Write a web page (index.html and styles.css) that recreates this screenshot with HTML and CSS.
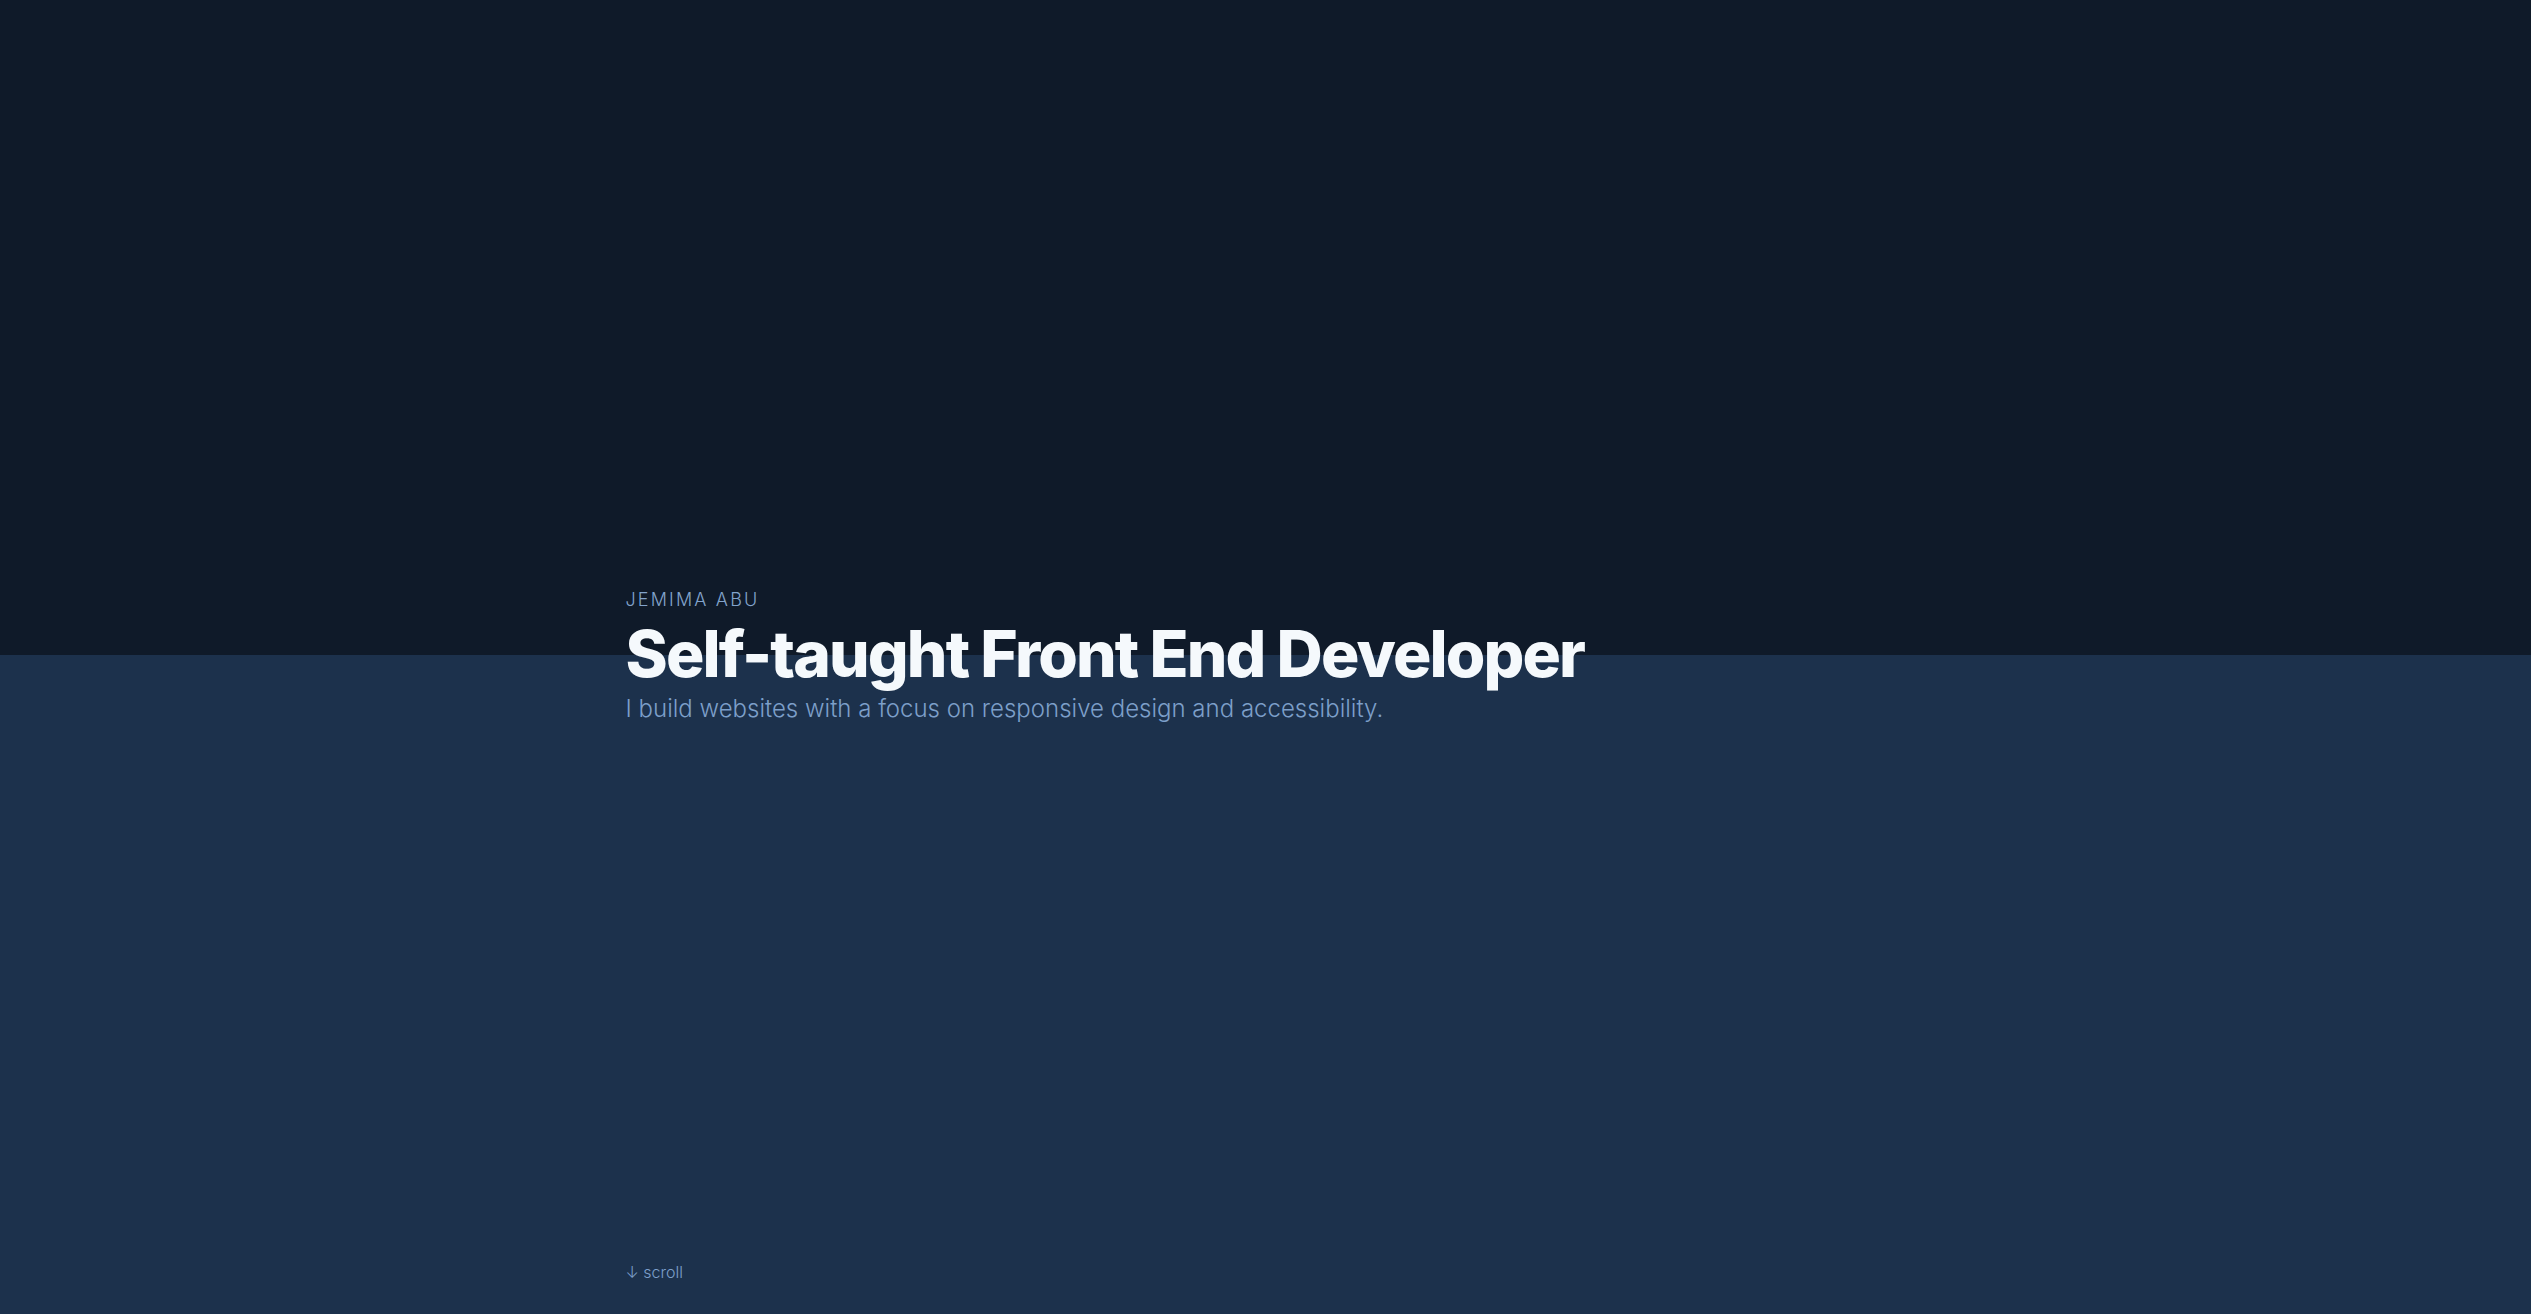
FILE: index.html
```html
<!DOCTYPE html>
<html lang="en">
<head>
<meta charset="utf-8">
<title>Jemima Abu</title>
<link rel="stylesheet" href="styles.css">
</head>
<body>
<main class="hero">
  <div class="hero-inner">
    <p class="eyebrow">JEMIMA ABU</p>
    <h1 class="title">Self-taught Front End Developer</h1>
    <p class="lead">I build websites with a focus on responsive design and accessibility.</p>
  </div>
  <div class="scroll-hint">↓ scroll</div>
</main>
</body>
</html>
```
FILE: styles.css
```css
* { box-sizing: border-box; }
html, body { margin: 0; padding: 0; }
body {
  font-family: Inter, "Noto Sans", sans-serif;
  background: #1c314c;
}
.hero {
  position: relative;
  min-height: 100vh;
  display: flex;
  align-items: center;
  justify-content: center;
  background: linear-gradient(to bottom, #0f1a29 0, #0f1a29 655px, #1c314c 655px, #1c314c 100%);
}
.hero-inner {
  width: 100%;
  max-width: 1280px;
  margin: 0 auto;
}
.eyebrow {
  margin: 0 0 7px;
  font-size: 18px;
  font-weight: 300;
  letter-spacing: 0.12em;
  color: #82a3cb;
  line-height: 1.3;
}
.title {
  margin: 0;
  font-size: 64px;
  font-weight: 800;
  letter-spacing: -0.029em;
  color: #f5f9fc;
  line-height: 1.1;
}
.lead {
  margin: 3px 0 0;
  font-size: 24px;
  font-weight: 300;
  color: #7c9fc9;
  line-height: 1.4;
}
.scroll-hint {
  position: absolute;
  left: 50%;
  bottom: 32px;
  width: 1280px;
  margin-left: -640px;
  font-size: 16px;
  font-weight: 300;
  color: #7c9fc9;
}
```
